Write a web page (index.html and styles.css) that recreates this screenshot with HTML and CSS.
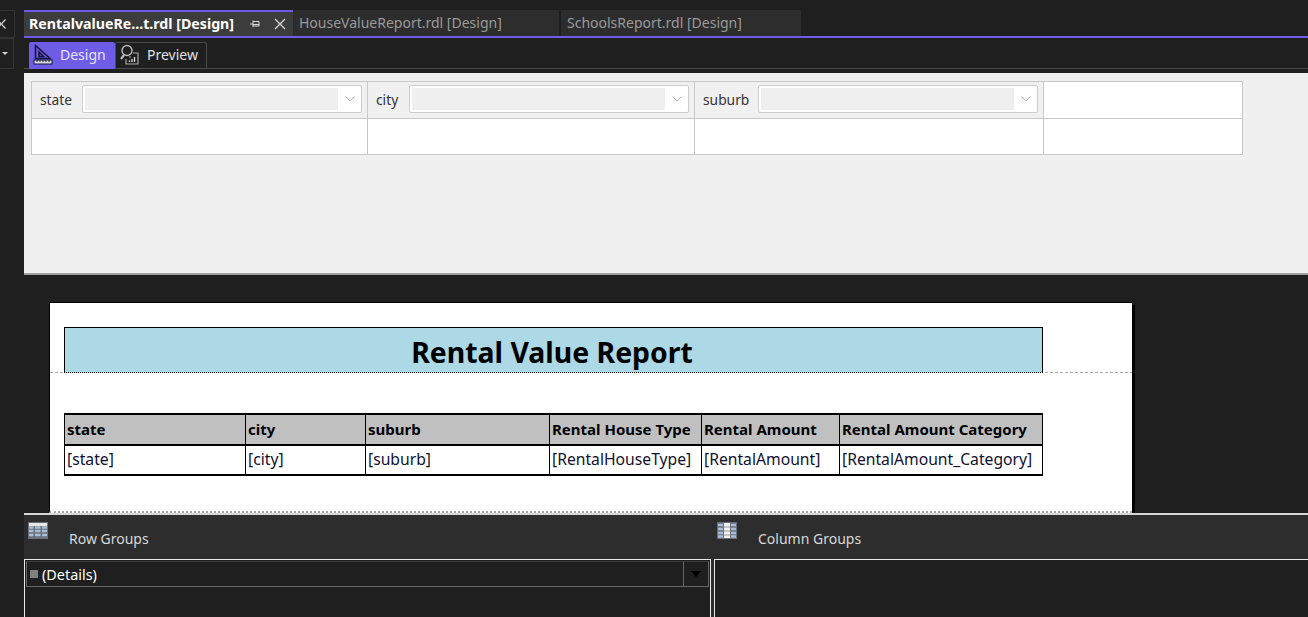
FILE: index.html
```html
<!DOCTYPE html>
<html lang="en">
<head>
  <meta charset="UTF-8">
  <title>RentalValueReport.rdl [Design]</title>
  <link rel="stylesheet" href="styles.css">
</head>
<body>
  <div class="shell">
    <div class="rail">
      <div class="rail-top">
        <svg class="rail-x" width="8" height="10" viewBox="0 0 8 10"><path d="M-3 0.5 L5.5 9.5 M5.5 0.5 L-3 9.5" stroke="#d0d0d0" stroke-width="1.3" fill="none"/></svg>
      </div>
      <div class="rail-drop"><span class="rail-caret"></span></div>
    </div>

    <div class="main">
      <div class="tabs">
        <div class="tab tab-active">
          <span class="tab-name">RentalvalueRe...t.rdl [Design]</span>
          <svg class="tab-pin" width="12" height="10" viewBox="0 0 12 10"><path d="M1 5 H4 M4 1.5 V8 M4 2.5 H10 V7 H4 M4 5.5 H10" stroke="#d8d8d8" stroke-width="1" fill="none"/></svg>
          <svg class="tab-close" width="12" height="12" viewBox="0 0 12 12"><path d="M1 1 L11 11 M11 1 L1 11" stroke="#d8d8d8" stroke-width="1.4" fill="none"/></svg>
        </div>
        <div class="tab tab-second">HouseValueReport.rdl [Design]</div>
        <div class="tab tab-third">SchoolsReport.rdl [Design]</div>
      </div>

      <div class="viewbar">
        <div class="view-btn view-on">
          <svg width="20" height="21" viewBox="0 0 20 21"><path d="M2.5 1.5 L17 14.500 H2.5 Z M6 8 L10.500 12.500 H6 Z" fill="none" stroke="#16163a" stroke-width="1.6"/><rect x="1" y="16" width="18" height="4" fill="#d8d8e4" stroke="#16163a"/><path d="M4 16 V18 M7 16 V18 M10 16 V18 M13 16 V18 M16 16 V18" stroke="#16163a"/></svg>
          <span>Design</span>
        </div>
        <div class="view-btn view-off">
          <svg width="19" height="21" viewBox="0 0 19 21"><circle cx="7" cy="6.500" r="5" fill="none" stroke="#b8b8b8" stroke-width="1.400"/><path d="M4 11 L1 15" stroke="#b8b8b8" stroke-width="2.200"/><path d="M11 13 H9 M13 9 H18 V20 H6 V15" fill="none" stroke="#a8a8a8" stroke-width="1.200"/><path d="M9.500 18 V16.500 M12 18 V15 M14.500 18 V13" stroke="#d0d0d0" stroke-width="1.400"/></svg>
          <span>Preview</span>
        </div>
      </div>

      <div class="params">
        <div class="param-grid">
          <div class="param-cell">
            <span class="param-label label-state">state</span>
            <div class="combo"><div class="combo-fill"></div><svg class="combo-arrow" width="10" height="6" viewBox="0 0 10 6"><path d="M0.500 0.500 L5 5 L9.500 0.500" fill="none" stroke="#b4b4b4"/></svg></div>
          </div>
          <div class="param-cell">
            <span class="param-label label-city">city</span>
            <div class="combo"><div class="combo-fill"></div><svg class="combo-arrow" width="10" height="6" viewBox="0 0 10 6"><path d="M0.500 0.500 L5 5 L9.500 0.500" fill="none" stroke="#b4b4b4"/></svg></div>
          </div>
          <div class="param-cell">
            <span class="param-label label-suburb">suburb</span>
            <div class="combo"><div class="combo-fill"></div><svg class="combo-arrow" width="10" height="6" viewBox="0 0 10 6"><path d="M0.500 0.500 L5 5 L9.500 0.500" fill="none" stroke="#b4b4b4"/></svg></div>
          </div>
          <div class="param-cell cell-last"></div>
          <div class="param-cell cell-blank"></div>
          <div class="param-cell cell-blank"></div>
          <div class="param-cell cell-blank"></div>
          <div class="param-cell cell-blank cell-last"></div>
        </div>
      </div>

      <div class="canvas">
        <div class="report">
          <div class="report-head">
            <div class="report-title">Rental Value Report</div>
          </div>
          <table class="report-table">
            <colgroup>
              <col class="col-a"><col class="col-b"><col class="col-c"><col class="col-d"><col class="col-e"><col class="col-f">
            </colgroup>
            <thead>
              <tr>
                <th>state</th>
                <th>city</th>
                <th>suburb</th>
                <th>Rental House Type</th>
                <th>Rental Amount</th>
                <th>Rental Amount Category</th>
              </tr>
            </thead>
            <tbody>
              <tr>
                <td>[state]</td>
                <td>[city]</td>
                <td>[suburb]</td>
                <td>[RentalHouseType]</td>
                <td>[RentalAmount]</td>
                <td>[RentalAmount_Category]</td>
              </tr>
            </tbody>
          </table>
        </div>
        <div class="report-shadow"></div>
      </div>

      <div class="groups">
        <div class="groups-head">
          <div class="group-title title-row">
            <svg class="grid-icon" width="20" height="17" viewBox="0 0 20 17"><rect width="20" height="17" fill="#6a6f78"/><rect x="1" y="1" width="18" height="3" fill="#e6e6e6"/><path d="M1 5.500 H5.500 M7 5.500 H12.500 M14 5.500 H19 M1 9 H5.500 M7 9 H12.500 M14 9 H19 M1 13 H5.500 M7 13 H12.500 M14 13 H19" stroke="#a9bdd6" stroke-width="2.500"/></svg>
            <span>Row Groups</span>
          </div>
          <div class="group-title title-col">
            <svg class="grid-icon" width="20" height="17" viewBox="0 0 20 17"><rect width="20" height="17" fill="#6a6f78"/><rect x="7" y="1" width="6" height="15" fill="#f0f0f0"/><path d="M1 3 H6 M14 3 H19 M1 7 H6 M14 7 H19 M1 11 H6 M14 11 H19 M1 14.500 H6 M14 14.500 H19" stroke="#a9bdd6" stroke-width="2.500"/><path d="M7 5 H13 M7 9 H13 M7 13 H13" stroke="#9a9a9a"/></svg>
            <span>Column Groups</span>
          </div>
        </div>
        <div class="groups-body">
          <div class="group-pane pane-row">
            <div class="detail-row">
              <span class="detail-mark"></span>
              <span class="detail-name">(Details)</span>
              <span class="detail-drop"><span class="drop-caret"></span></span>
            </div>
          </div>
          <div class="group-pane pane-col"></div>
        </div>
      </div>
    </div>
  </div>
</body>
</html>
```

FILE: styles.css
```css
* {
  box-sizing: border-box;
}
body {
  margin: 0;
  background-color: #1f1f1f;
  font-family: "Noto Sans", "Open Sans", Arial, sans-serif;
  overflow: hidden;
}
.shell {
  display: flex;
  width: 1308px;
  height: 617px;
  overflow: hidden;
}

/* left tool strip */
.rail {
  width: 24px;
  flex: none;
  padding-top: 10px;
}
.rail-top {
  width: 15px;
  height: 28px;
  border: 1px solid #333;
  border-left: 0;
  display: flex;
  align-items: center;
}
.rail-x {
  display: block;
  margin-top: -1px;
}
.rail-drop {
  width: 14px;
  height: 31px;
  border: 1px solid #333;
  border-left: 0;
  display: flex;
  align-items: center;
  justify-content: center;
}
.rail-caret {
  width: 0;
  height: 0;
  border-left: 3px solid transparent;
  border-right: 3px solid transparent;
  border-top: 3px solid #d0d0d0;
  margin-left: -4px;
}
.main {
  flex: 1;
  min-width: 0;
}

/* document tabs */
.tabs {
  display: flex;
  height: 28px;
  margin-top: 10px;
  border-bottom: 2px solid #6e5ce6;
  font-size: 14px;
  line-height: 26px;
}
.tab {
  height: 26px;
  background-color: #2d2d2d;
  color: #9a9a9a;
  white-space: nowrap;
}
.tab-active {
  width: 269px;
  display: flex;
  align-items: center;
  padding: 0 7px 0 5px;
  background-color: #3c3c3c;
  border-top: 2px solid #6e5ce6;
  color: #fff;
  font-weight: 700;
}
.tab-name {
  flex: 1;
  font-size: 14.2px;
}
.tab-pin {
  margin-right: 13px;
}
.tab-second {
  width: 266px;
  padding-left: 6px;
  margin-right: 2px;
}
.tab-third {
  width: 240px;
  padding-left: 6px;
}

/* design / preview */
.viewbar {
  display: flex;
  height: 35px;
  padding: 4px 0 0 5px;
  border-bottom: 4px solid #1f1f1f;
  box-shadow: inset 0 -1px 0 #4a4a4a;
}
.view-btn {
  height: 27px;
  display: flex;
  align-items: center;
  font-size: 14px;
  padding-bottom: 2px;
}
.view-btn svg {
  flex: none;
}
.view-on {
  width: 86px;
  padding-left: 4px;
  background-color: #6e5ce6;
  color: #e4e4ff;
  border-radius: 2px 2px 0 0;
  gap: 7px;
}
.view-off {
  width: 92px;
  padding-left: 4px;
  padding-bottom: 3px;
  color: #e0e0e0;
  border: 1px solid #4a4a4a;
  border-bottom: 0;
  border-radius: 2px 2px 0 0;
  gap: 8px;
}

/* parameter pane */
.params {
  height: 202px;
  padding: 8px 0 0 7px;
  background-color: #f0f0f0;
  border-bottom: 2px solid #a0a0a0;
}
.param-grid {
  display: grid;
  width: 1212px;
  grid-template-columns: 336px 327px 349px 199px;
  grid-template-rows: 37px 36px;
  border-top: 1px solid #c8c8c8;
  border-left: 1px solid #c8c8c8;
}
.param-cell {
  display: flex;
  align-items: center;
  padding: 0 0 2px 8px;
  border-right: 1px solid #c8c8c8;
  border-bottom: 1px solid #c8c8c8;
  font-size: 13.8px;
  color: #333;
}
.cell-blank,
.cell-last {
  background-color: #fff;
}
.param-label {
  flex: none;
}
.label-state {
  width: 42px;
}
.label-city {
  width: 33px;
}
.label-suburb {
  width: 55px;
}
.combo {
  width: 280px;
  height: 28px;
  display: flex;
  align-items: center;
  padding: 0 6px 0 2px;
  background-color: #fff;
  border: 1px solid #ccc;
  border-radius: 2px;
}
.combo-fill {
  height: 22px;
  flex: 1;
  margin-right: 7px;
  background-color: #efefef;
}
.combo-arrow {
  flex: none;
}

/* report canvas */
.canvas {
  height: 238px;
  padding: 27px 0 0 25px;
  display: flex;
  align-items: stretch;
  background-color: #1f1f1f;
}
.report {
  width: 1083px;
  height: 211px;
  padding: 1px 0 0 1px;
  background-color: #fff;
  border-top: 1px solid #000;
  border-left: 1px solid #000;
  border-bottom: 2px dotted #a8a8a8;
}
.report-shadow {
  width: 3px;
  margin-top: 3px;
  background-color: #000;
}
.report-head {
  height: 69px;
  padding: 23px 90px 0 0;
  margin: 0 -1px 0 -1px;
  border-bottom: 1px dashed #a8a8a8;
}
.report-title {
  height: 46px;
  margin-left: 14px;
  padding-right: 3px;
  background-color: #add8e6;
  border: 1px solid #000;
  border-bottom: 1px dotted #000;
  text-align: center;
  font-size: 28.4px;
  font-weight: 700;
  line-height: 49px;
  color: #000;
}
.report-table {
  width: 978px;
  margin: 40px 0 0 13px;
  border-collapse: collapse;
  table-layout: fixed;
  font-size: 15px;
  color: #000;
}
.col-a { width: 181px; }
.col-b { width: 120px; }
.col-c { width: 184px; }
.col-d { width: 152px; }
.col-e { width: 138px; }
.col-f { width: 203px; }
.report-table th,
.report-table td {
  padding: 0 0 2px 2px;
  text-align: left;
  white-space: nowrap;
  border: 1px solid #000;
}
.report-table th {
  height: 31px;
  background-color: #c0c0c0;
  font-weight: 700;
  border-top: 2px solid #000;
  border-bottom: 2px solid #000;
}
.report-table td {
  height: 30px;
  padding-left: 2px;
  font-size: 15.7px;
  color: #111130;
  border-bottom: 2px solid #000;
}

/* row and column groups */
.groups {
  border-top: 2px solid #d8d8d8;
  background-color: #2d2d2d;
  height: 104px;
}
.groups-head {
  display: flex;
  height: 44px;
  font-size: 14px;
  color: #d8d8d8;
}
.group-title {
  display: flex;
}
.grid-icon {
  display: block;
  margin-top: 7px;
}
.group-title span {
  margin-top: 14px;
}
.title-row {
  width: 693px;
  padding-left: 4px;
  gap: 21px;
}
.title-col {
  gap: 21px;
}
.groups-body {
  display: flex;
  gap: 3px;
  height: 58px;
  background-color: #2d2d2d;
}
.group-pane {
  background-color: #1f1f1f;
  border: 1px solid #e8e8e8;
  border-bottom: 0;
  padding: 1px;
}
.pane-row {
  width: 687px;
}
.pane-col {
  flex: 1;
  border-right: 0;
}
.detail-row {
  display: flex;
  align-items: center;
  height: 26px;
  border: 1px solid #666;
  border-top-color: #3a3a3a;
  color: #fff;
  font-size: 14.4px;
  padding-left: 3px;
}
.detail-mark {
  width: 8px;
  height: 8px;
  margin-right: 4px;
  background-color: #808080;
}
.detail-name {
  flex: 1;
}
.detail-drop {
  width: 25px;
  height: 100%;
  display: flex;
  align-items: center;
  justify-content: center;
  border-left: 1px solid #666;
}
.drop-caret {
  width: 0;
  height: 0;
  border-left: 5px solid transparent;
  border-right: 5px solid transparent;
  border-top: 6px solid #000;
}
```
